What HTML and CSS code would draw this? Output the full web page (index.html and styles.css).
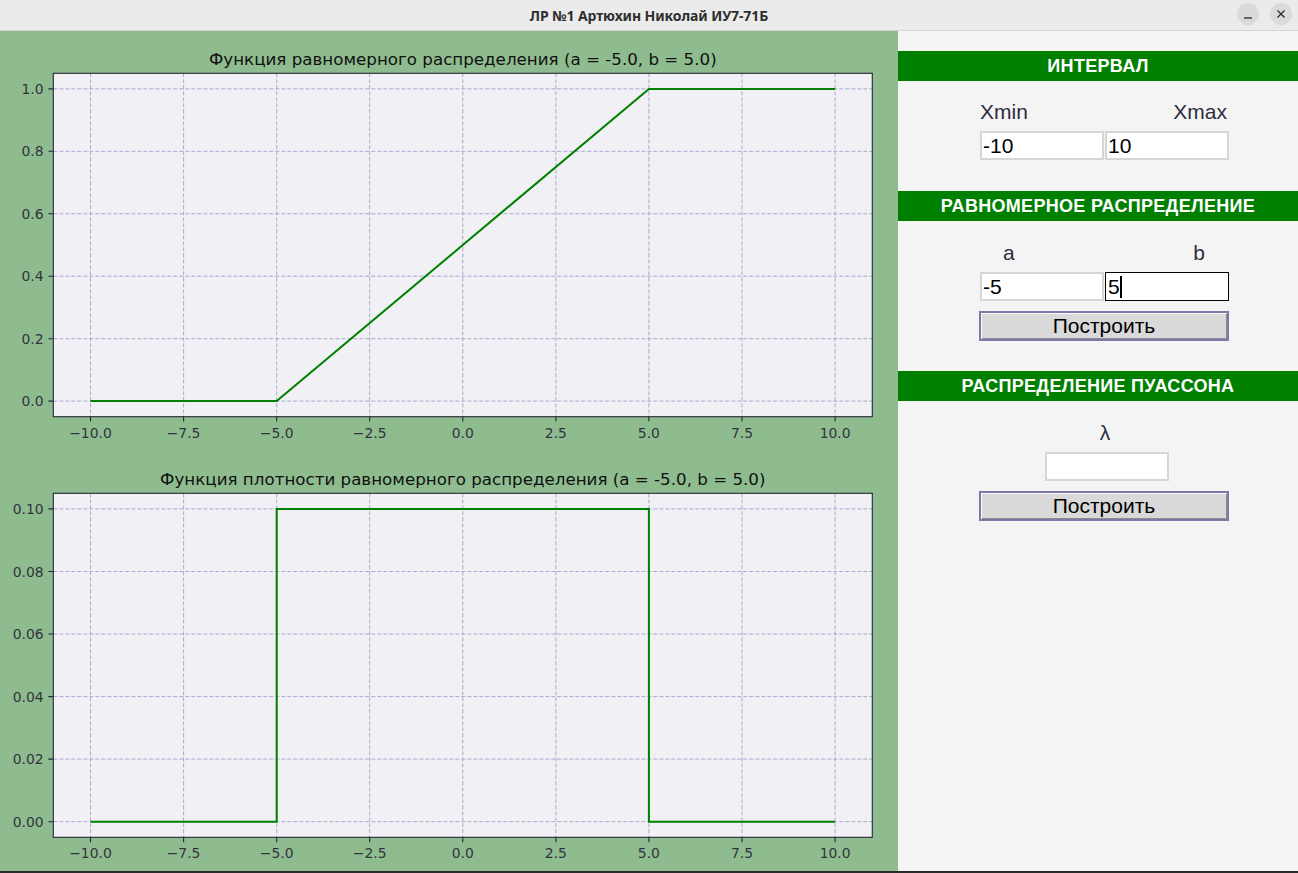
FILE: index.html
```html
<!DOCTYPE html>
<html lang="ru">
<head>
<meta charset="utf-8">
<title>ЛР №1 Артюхин Николай ИУ7-71Б</title>
<link rel="stylesheet" href="styles.css">
</head>
<body>
<div class="window">
  <header class="titlebar">
    <div class="title">ЛР №1 Артюхин Николай ИУ7-71Б</div>
    <div class="wbtns">
      <span class="wbtn"><svg width="22" height="22" viewBox="0 0 22 22"><path d="M7 15h8" stroke="#2e2e2e" stroke-width="1.4"/></svg></span>
      <span class="wbtn"><svg width="22" height="22" viewBox="0 0 22 22"><path d="M7.5 7.5l7 7M14.5 7.5l-7 7" stroke="#2e2e2e" stroke-width="1.4"/></svg></span>
    </div>
  </header>
  <main class="main">
    <section class="canvas">
      <svg class="fig" width="898" height="840" viewBox="0 0 898 840">
        <!-- Plot 1 -->
        <rect x="53.3" y="42.3" width="819" height="343.4" fill="#f0f0f5"/>
        <g class="grid">
          <path d="M90.5 42.3V385.7M183.6 42.3V385.7M276.7 42.3V385.7M369.7 42.3V385.7M462.8 42.3V385.7M555.9 42.3V385.7M648.9 42.3V385.7M742 42.3V385.7M835.1 42.3V385.7"/>
          <path d="M53.3 57.9H872.3M53.3 120.3H872.3M53.3 182.8H872.3M53.3 245.2H872.3M53.3 307.7H872.3M53.3 370.1H872.3"/>
        </g>
        <polyline class="curve" points="90.5,370.1 276.7,370.1 648.9,57.9 835.1,57.9"/>
        <rect class="spine" x="53.3" y="42.3" width="819" height="343.4"/>
        <g class="tick">
          <path d="M90.5 385.7v4.9M183.6 385.7v4.9M276.7 385.7v4.9M369.7 385.7v4.9M462.8 385.7v4.9M555.9 385.7v4.9M648.9 385.7v4.9M742 385.7v4.9M835.1 385.7v4.9"/>
          <path d="M53.3 57.9h-4.9M53.3 120.3h-4.9M53.3 182.8h-4.9M53.3 245.2h-4.9M53.3 307.7h-4.9M53.3 370.1h-4.9"/>
        </g>
        <text class="ptitle" x="462.8" y="34">Функция равномерного распределения (a = -5.0, b = 5.0)</text>
        <g class="xl">
          <text x="90.5" y="407">−10.0</text>
          <text x="183.6" y="407">−7.5</text>
          <text x="276.7" y="407">−5.0</text>
          <text x="369.7" y="407">−2.5</text>
          <text x="462.8" y="407">0.0</text>
          <text x="555.9" y="407">2.5</text>
          <text x="648.9" y="407">5.0</text>
          <text x="742" y="407">7.5</text>
          <text x="835.1" y="407">10.0</text>
        </g>
        <g class="yl">
          <text x="43.6" y="62.9">1.0</text>
          <text x="43.6" y="125.3">0.8</text>
          <text x="43.6" y="187.8">0.6</text>
          <text x="43.6" y="250.2">0.4</text>
          <text x="43.6" y="312.7">0.2</text>
          <text x="43.6" y="375.1">0.0</text>
        </g>

        <!-- Plot 2 -->
        <rect x="53.3" y="462.3" width="819" height="344" fill="#f0f0f5"/>
        <g class="grid">
          <path d="M90.5 462.3V806.3M183.6 462.3V806.3M276.7 462.3V806.3M369.7 462.3V806.3M462.8 462.3V806.3M555.9 462.3V806.3M648.9 462.3V806.3M742 462.3V806.3M835.1 462.3V806.3"/>
          <path d="M53.3 477.9H872.3M53.3 540.5H872.3M53.3 603H872.3M53.3 665.6H872.3M53.3 728.1H872.3M53.3 790.7H872.3"/>
        </g>
        <polyline class="curve" points="90.5,790.7 276.7,790.7 276.7,477.9 648.9,477.9 648.9,790.7 835.1,790.7"/>
        <rect class="spine" x="53.3" y="462.3" width="819" height="344"/>
        <g class="tick">
          <path d="M90.5 806.3v4.9M183.6 806.3v4.9M276.7 806.3v4.9M369.7 806.3v4.9M462.8 806.3v4.9M555.9 806.3v4.9M648.9 806.3v4.9M742 806.3v4.9M835.1 806.3v4.9"/>
          <path d="M53.3 477.9h-4.9M53.3 540.5h-4.9M53.3 603h-4.9M53.3 665.6h-4.9M53.3 728.1h-4.9M53.3 790.7h-4.9"/>
        </g>
        <text class="ptitle" x="462.8" y="454">Функция плотности равномерного распределения (a = -5.0, b = 5.0)</text>
        <g class="xl">
          <text x="90.5" y="827">−10.0</text>
          <text x="183.6" y="827">−7.5</text>
          <text x="276.7" y="827">−5.0</text>
          <text x="369.7" y="827">−2.5</text>
          <text x="462.8" y="827">0.0</text>
          <text x="555.9" y="827">2.5</text>
          <text x="648.9" y="827">5.0</text>
          <text x="742" y="827">7.5</text>
          <text x="835.1" y="827">10.0</text>
        </g>
        <g class="yl">
          <text x="43.6" y="482.9">0.10</text>
          <text x="43.6" y="545.5">0.08</text>
          <text x="43.6" y="608">0.06</text>
          <text x="43.6" y="670.6">0.04</text>
          <text x="43.6" y="733.1">0.02</text>
          <text x="43.6" y="795.7">0.00</text>
        </g>
      </svg>
    </section>
    <aside class="panel">
      <div class="hdr hdr-first">ИНТЕРВАЛ</div>
      <div class="content">
        <div class="labels">
          <span>Xmin</span><span>Xmax</span>
        </div>
        <div class="entries">
          <div class="entry">-10</div>
          <div class="entry">10</div>
        </div>
      </div>

      <div class="hdr hdr-second">РАВНОМЕРНОЕ РАСПРЕДЕЛЕНИЕ</div>
      <div class="content">
        <div class="labels labels-ab">
          <span>a</span><span>b</span>
        </div>
        <div class="entries">
          <div class="entry">-5</div>
          <div class="entry focused">5<span class="caret"></span></div>
        </div>
        <div class="button">Построить</div>
      </div>

      <div class="hdr hdr-third">РАСПРЕДЕЛЕНИЕ ПУАССОНА</div>
      <div class="content">
        <div class="labels labels-center">
          <span>λ</span>
        </div>
        <div class="entries entries-center">
          <div class="entry"></div>
        </div>
        <div class="button">Построить</div>
      </div>
    </aside>
  </main>
  <footer class="bottom"></footer>
</div>
</body>
</html>
```

FILE: styles.css
```css
* { box-sizing: border-box; }
html, body { margin: 0; padding: 0; }
body {
  width: 1298px;
  height: 873px;
  overflow: hidden;
  background: #2a2a2a;
  font-family: "Liberation Sans", Arial, sans-serif;
}
.window {
  display: flex;
  flex-direction: column;
  width: 1298px;
  height: 873px;
}
.titlebar {
  height: 31px;
  flex: none;
  background: #ebebeb;
  border-bottom: 1px solid #d6d6d6;
  display: flex;
  align-items: center;
  justify-content: center;
  position: relative;
}
.title {
  font-family: "Noto Sans", "DejaVu Sans", sans-serif;
  font-weight: bold;
  font-size: 14px;
  color: #2e2e2e;
  letter-spacing: -0.1px;
}
.wbtns {
  position: absolute;
  right: 6px;
  top: 3px;
  display: flex;
  gap: 11px;
}
.wbtn {
  width: 22px;
  height: 22px;
  border-radius: 50%;
  background: #dadada;
  display: block;
}
.wbtn svg { display: block; }
.main {
  height: 840px;
  flex: none;
  display: flex;
}
.canvas {
  width: 898px;
  flex: none;
  background: #8fbc8f;
}
.fig { display: block; }
.grid path {
  fill: none;
  stroke: #a9a9cf;
  stroke-width: 1;
  stroke-dasharray: 4 2;
}
.curve {
  fill: none;
  stroke: #008000;
  stroke-width: 2;
  stroke-linejoin: miter;
}
.spine {
  fill: none;
  stroke: #262636;
  stroke-width: 1.1;
}
.tick path {
  stroke: #262636;
  stroke-width: 1.1;
}
.ptitle {
  font-family: "DejaVu Sans", sans-serif;
  font-size: 16.7px;
  fill: #111;
  text-anchor: middle;
}
.xl text {
  font-family: "DejaVu Sans", sans-serif;
  font-size: 13.9px;
  fill: #333340;
  text-anchor: middle;
}
.yl text {
  font-family: "DejaVu Sans", sans-serif;
  font-size: 13.9px;
  fill: #333340;
  text-anchor: end;
}
.panel {
  flex: 1;
  background: #f4f4f4;
  display: flex;
  flex-direction: column;
}
.hdr {
  height: 30px;
  line-height: 30px;
  background: #008000;
  color: #ffffff;
  font-weight: bold;
  font-size: 18px;
  letter-spacing: 0.3px;
  text-align: center;
}
.hdr-first { margin-top: 20px; }
.hdr-second { margin-top: 31px; }
.hdr-third { margin-top: 30px; }
.content {
  margin-left: 81px;
  width: 250px;
  display: flex;
  flex-direction: column;
}
.labels {
  margin-top: 16px;
  height: 30px;
  line-height: 30px;
  font-size: 21px;
  color: #2d2d3d;
  display: flex;
  justify-content: space-between;
  padding: 0 2px 0 1px;
}
.labels-ab {
  margin-top: 17px;
  padding: 0 24px 0 24px;
}
.labels-center {
  margin-top: 17px;
  justify-content: center;
  padding-left: 4px;
}
.entries {
  margin-top: 4px;
  margin-left: 1px;
  display: flex;
  gap: 1px;
}
.entries-center {
  justify-content: center;
  padding-left: 4px;
}
.entry {
  width: 124px;
  height: 29px;
  background: #ffffff;
  border: 2px solid #d6d6d6;
  font-size: 21px;
  line-height: 25px;
  color: #000;
  padding-left: 1px;
  white-space: nowrap;
}
.entry.focused {
  border: 1px solid #000;
  padding-left: 2px;
  line-height: 27px;
}
.caret {
  display: inline-block;
  width: 2px;
  height: 22px;
  background: #000;
  vertical-align: -4px;
  margin-left: 0;
}
.button {
  margin-top: 10px;
  width: 250px;
  height: 30px;
  border: 2px solid #7a7aaa;
  background: #d9d9d9;
  box-shadow: inset 1px 1px 0 #fafafa, inset -1px -1px 0 #8c8c8c;
  text-align: center;
  font-size: 21px;
  line-height: 26px;
  color: #000;
}
.bottom {
  height: 2px;
  flex: none;
  background: #2a2a2a;
}
```
